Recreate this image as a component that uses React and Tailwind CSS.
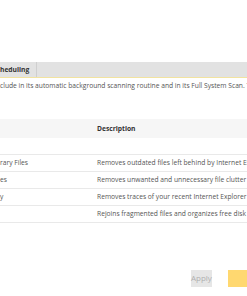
import React from 'react'

const rows = [
  { name: 'rary Files', desc: 'Removes outdated files left behind by Internet Explorer' },
  { name: 'es', desc: 'Removes unwanted and unnecessary file clutter from' },
  { name: 'y', desc: 'Removes traces of your recent Internet Explorer browsing' },
  { name: '', desc: 'Rejoins fragmented files and organizes free disk space' },
]

const App = () => {
  return (
    <div
      className="w-[247px] h-[296px] bg-white overflow-hidden text-[#555] text-[6.7px] leading-none"
      style={{ fontFamily: '"Open Sans", "Noto Sans", sans-serif' }}
    >
      <div className="h-[62px]"></div>

      {/* Tabs */}
      <div className="flex h-[16px] bg-[#e2e2e2] border-b border-[#f2e3a0] w-[400px]">
        <div className="w-[37px] flex items-center pt-[1px] border-r border-[#cfcfcf] font-bold text-[#333] whitespace-nowrap">
          heduling
        </div>
      </div>

      {/* Intro */}
      <p className="mt-[5px] whitespace-nowrap">
        clude in its automatic background scanning routine and in its Full System Scan. The
      </p>

      {/* Table */}
      <div className="mt-[29px] w-[400px]">
        <div className="flex h-[19px] items-center pt-[2px] bg-[#f6f6f6]">
          <div className="w-[97px]"></div>
          <div className="font-bold text-[#333]">Description</div>
        </div>
        <div className="h-[17px] border-b border-[#e9e9e9]"></div>
        {rows.map((r, i) => (
          <div key={i} className="flex h-[17px] items-center pt-[1px] border-b border-[#e9e9e9] whitespace-nowrap">
            <div className="w-[97px]">{r.name}</div>
            <div>{r.desc}</div>
          </div>
        ))}
      </div>

      {/* Buttons */}
      <div className="mt-[47px] flex">
        <div className="ml-[191px] w-[33px] h-[17px] flex items-center justify-center bg-[#e6e6e6] text-[#b0b0b0] text-[8px]">
          Apply
        </div>
        <div className="ml-[16px] w-[40px] h-[17px] bg-[#ffd870] shrink-0"></div>
      </div>
    </div>
  )
}

export default App
